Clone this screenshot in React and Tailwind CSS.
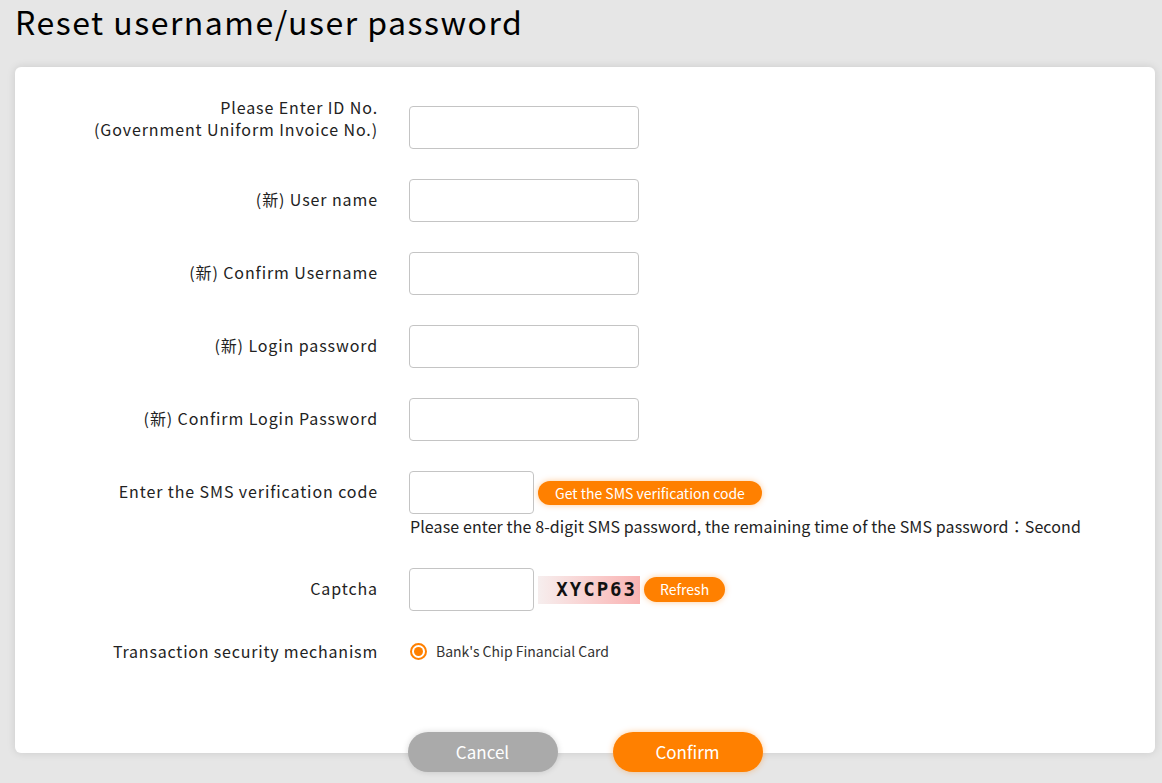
import React from "react";

const font = { fontFamily: '"Noto Sans CJK TC", "Noto Sans", sans-serif' };

function Field({ label, children, labelClass = "pt-[10px]" }) {
  return (
    <div className="flex">
      <div className={`w-[363px] shrink-0 text-right text-[16px] leading-[21px] tracking-[0.9px] text-[#222] ${labelClass}`}>
        {label}
      </div>
      <div className="ml-[31px] flex-1">{children}</div>
    </div>
  );
}

function Input({ w = "w-[230px]" }) {
  return <div className={`${w} h-[43px] rounded-[4px] border border-[#c4c4c4] bg-white`} />;
}

export default function App() {
  return (
    <div className="min-h-[783px] bg-[#e6e6e6] pl-[15px] pr-[7px]" style={font}>
      <h1 className="text-[32px] leading-[42px] text-black tracking-[1.5px]">Reset username/user password</h1>
      <div className="mt-[25px] rounded-[6px] bg-white shadow-[0_0_8px_rgba(0,0,0,0.12)] pt-[39px] pb-[91px] flex flex-col gap-[30px]">
        <Field labelClass="-mt-[10px] leading-[22px]" label={<>Please Enter ID No.<br />(Government Uniform Invoice No.)</>}>
          <Input />
        </Field>
        <Field label="(新) User name"><Input /></Field>
        <Field label="(新) Confirm Username"><Input /></Field>
        <Field label="(新) Login password"><Input /></Field>
        <Field label="(新) Confirm Login Password"><Input /></Field>
        <Field label="Enter the SMS verification code">
          <div className="flex items-center">
            <Input w="w-[125px]" />
            <button className="ml-[4px] h-[24px] px-[17px] rounded-full bg-[#ff8000] text-white text-[14px] leading-[24px] shadow-[0_0_6px_rgba(255,128,0,0.4)]">
              Get the SMS verification code
            </button>
          </div>
          <div className="text-[16px] leading-[24px] text-[#222] pl-[1px] tracking-[0.1px]">
            Please enter the 8-digit SMS password, the remaining time of the SMS password：Second
          </div>
        </Field>
        <Field label="Captcha">
          <div className="flex items-center">
            <Input w="w-[125px]" />
            <div className="ml-[4px] w-[102px] h-[28px] flex items-center justify-end pr-[3px] bg-gradient-to-r from-[#f6eeee] to-[#f9b3b3]">
              <span className="text-[19px] font-bold tracking-[2px] text-[#111] leading-none" style={{ fontFamily: '"DejaVu Sans Mono", monospace' }}>XYCP63</span>
            </div>
            <button className="ml-[4px] h-[25px] px-[16px] rounded-full bg-[#ff8000] text-white text-[14px] leading-[25px] shadow-[0_0_6px_rgba(255,128,0,0.4)]">
              Refresh
            </button>
          </div>
        </Field>
        <div className="flex items-center">
          <div className="w-[363px] shrink-0 text-right text-[16px] leading-[21px] tracking-[0.8px] text-[#222]">
            Transaction security mechanism
          </div>
          <div className="ml-[32px] flex items-center">
            <span className="w-[17px] h-[17px] rounded-full border-2 border-[#ff8000] flex items-center justify-center">
              <span className="w-[9px] h-[9px] rounded-full bg-[#ff8000]" />
            </span>
            <span className="ml-[9px] text-[14px] text-[#333]">Bank's Chip Financial Card</span>
          </div>
        </div>
      </div>
      <div className="-mt-[21px] flex justify-center gap-[55px] relative">
        <button className="w-[150px] h-[40px] rounded-full bg-[#aaaaaa] text-white text-[17px] shadow-[0_0_6px_rgba(0,0,0,0.15)]">Cancel</button>
        <button className="w-[150px] h-[40px] rounded-full bg-[#ff8000] text-white text-[17px] shadow-[0_0_6px_rgba(255,128,0,0.4)]">Confirm</button>
      </div>
    </div>
  );
}
